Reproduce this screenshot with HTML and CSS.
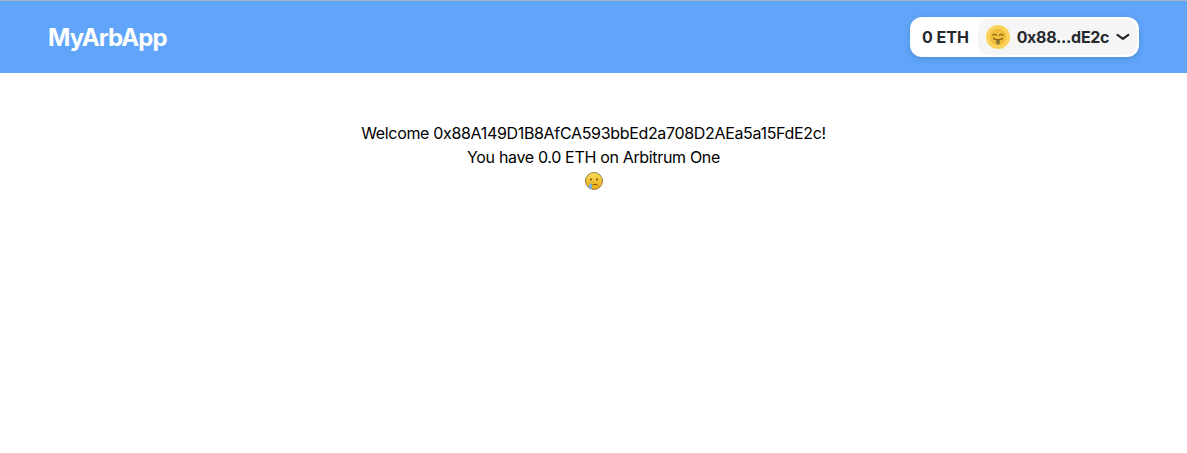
FILE: index.html
```html
<!DOCTYPE html>
<html lang="en">
<head>
  <meta charset="UTF-8" />
  <meta name="viewport" content="width=device-width, initial-scale=1.0"/>
  <title>MyArbApp</title>
  <link rel="stylesheet" href="styles.css">
</head>
<body>

  <header class="navbar">
    <a href="#" class="logo">MyArbApp</a>

    <div class="wallet">
      <span class="balance">0 ETH</span>
      <button class="account" type="button">
        <span class="avatar">
          <svg viewBox="0 0 24 24" width="18" height="18" aria-hidden="true">
            <circle cx="12" cy="12" r="11" fill="#f0bd3a"/>
            <path d="M5 9.500q2.500-2 5 0M14 9.500q2.500-2 5 0" fill="none" stroke="#9a6b12" stroke-width="1.800" stroke-linecap="round"/>
            <path d="M6 14q6 3.500 12 0" fill="none" stroke="#7a4f10" stroke-width="1.800" stroke-linecap="round"/>
            <path d="M9.500 15.500h5v4a2.500 2.500 0 0 1-5 0z" fill="#8a7a30"/>
          </svg>
        </span>
        <span class="address">0x88...dE2c</span>
        <svg class="chevron" viewBox="0 0 14 8" width="14" height="8" aria-hidden="true">
          <path d="M1.500 1.800 7 6l5.500-4.200" fill="none" stroke="#25292e" stroke-width="2.200" stroke-linecap="round" stroke-linejoin="round"/>
        </svg>
      </button>
    </div>
  </header>

  <main class="content">
    <p>Welcome 0x88A149D1B8AfCA593bbEd2a708D2AEa5a15FdE2c!</p>
    <p>You have 0.0 ETH on Arbitrum One</p>
    <p class="emoji-row">
      <svg viewBox="0 0 18 18" width="18" height="18" role="img" aria-label="crying face">
        <defs>
          <linearGradient id="faceFill" x1="0" y1="0" x2="0" y2="1">
            <stop offset="0" stop-color="#f9dc5c"/>
            <stop offset="1" stop-color="#eba80e"/>
          </linearGradient>
        </defs>
        <circle cx="9" cy="9" r="8.500" fill="url(#faceFill)" stroke="#7d6a30" stroke-width="0.800"/>
        <circle cx="6" cy="7.500" r="1" fill="#6b4a12"/>
        <circle cx="12" cy="7.500" r="1" fill="#6b4a12"/>
        <path d="M7.500 13q2.500-1.500 5 0" fill="none" stroke="#7a5512" stroke-width="1"/>
        <path d="M5.500 10.500c1 1.700 1.800 3 1.800 4.400a1.800 1.800 0 0 1-3.600 0c0-1.400.800-2.700 1.800-4.400z" fill="#6fb0e8"/>
      </svg>
    </p>
  </main>

</body>
</html>
```

FILE: styles.css
```css
* {
  box-sizing: border-box;
}

body {
  margin: 0;
  font-family: 'Inter', 'Liberation Sans', sans-serif;
  background-color: #fff;
  color: #000;
  font-size: 16px;
  line-height: 24px;
}

.navbar {
  display: flex;
  align-items: center;
  justify-content: space-between;
  height: 73px;
  padding: 0 48px;
  background-color: #60a5fa;
  border-top: 1px solid #a9b4c2;
}

.logo {
  margin-top: 2px;
  color: #fff;
  font-size: 24px;
  font-weight: 700;
  line-height: 32px;
  letter-spacing: -0.9px;
  text-decoration: none;
}

.wallet {
  display: flex;
  align-items: center;
  height: 40px;
  background-color: #fff;
  border-radius: 12px;
  box-shadow: 0 2px 6px rgba(0,0,0,0.15);
  color: #25292e;
  font-weight: 700;
}

.balance {
  width: 68px;
  padding-left: 12px;
}

.account {
  display: flex;
  align-items: center;
  gap: 7px;
  width: 159px;
  height: 36px;
  margin-right: 2px;
  padding: 0 7px 0 8px;
  background-color: #f5f5f5;
  border: none;
  border-radius: 12px;
  color: inherit;
  font: inherit;
  cursor: pointer;
}

.avatar {
  display: flex;
  align-items: center;
  justify-content: center;
  width: 24px;
  height: 24px;
  border-radius: 50%;
  background-color: #fbd35b;
}

.address {
  letter-spacing: -0.3px;
}

.chevron {
  display: block;
  margin-left: auto;
}

.content {
  padding-top: 48px;
  text-align: center;
  letter-spacing: -0.33px;
}

.content p {
  margin: 0;
}

.emoji-row svg {
  display: inline-block;
  vertical-align: -3px;
}
```
